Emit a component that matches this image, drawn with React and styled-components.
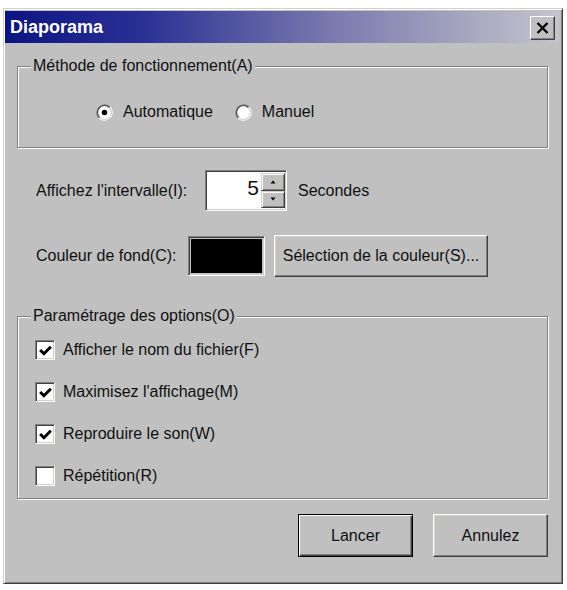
import React from "react";
import styled, { createGlobalStyle } from "styled-components";

const Global = createGlobalStyle`
  body {
    margin: 0;
    background: #ffffff;
    font-family: "Liberation Sans", Arial, sans-serif;
    font-size: 16px;
    color: #111111;
  }
`;

const Window = styled.div`
  box-sizing: border-box;
  width: 560px;
  height: 576px;
  margin: 8px 0 0 3px;
  padding: 2px 3px 2px 1px;
  background: #c0c0c0;
  border: 1px solid;
  border-color: #d4d0c8 #404040 #404040 #d4d0c8;
  box-shadow: inset 1px 1px 0 #ffffff, inset -1px -1px 0 #808080;
  display: flex;
  flex-direction: column;
`;

const TitleBar = styled.div`
  height: 32px;
  display: flex;
  align-items: center;
  justify-content: space-between;
  padding: 0 4px 0 5px;
  background: linear-gradient(to right, #0c1484 0%, #2a3194 25%, #7878ae 58%, #c4c4cc 100%);
`;

const Title = styled.span`
  color: #ffffff;
  font-weight: bold;
  font-size: 18px;
`;

const CloseButton = styled.button`
  box-sizing: border-box;
  width: 25px;
  height: 24px;
  padding: 0;
  margin-top: 2px;
  display: flex;
  align-items: center;
  justify-content: center;
  background: #c0c0c0;
  border: 1px solid;
  border-color: #ffffff #404040 #404040 #ffffff;
  box-shadow: inset -1px -1px 0 #808080;
`;

const Body = styled.div`
  flex: 1;
  display: flex;
  flex-direction: column;
  padding: 13px 11px 0 12px;
`;

const Group = styled.fieldset`
  margin: 0;
  padding: 0;
  min-width: 0;
  border: 1px solid #808080;
  box-shadow: inset 1px 1px 0 #ffffff, 1px 1px 0 #ffffff;
`;

const Legend = styled.legend`
  margin-left: 13px;
  padding: 0 2px;
  line-height: 20px;
  background: #c0c0c0;
`;

const GroupBody = styled.div`
  display: flex;
  flex-direction: ${(p) => p.$dir || "row"};
  gap: ${(p) => p.$gap || "0"};
  padding: ${(p) => p.$pad};
`;

const Choice = styled.label`
  display: flex;
  align-items: center;
  height: 20px;
  line-height: 20px;
  white-space: nowrap;
  gap: ${(p) => p.$gap || "8px"};
  margin-right: ${(p) => p.$mr || "0"};
`;

const Row = styled.div`
  display: flex;
  align-items: center;
  padding-left: 19px;
  margin-top: ${(p) => p.$mt};
`;

const FieldLabel = styled.span`
  width: ${(p) => p.$w};
  flex-shrink: 0;
  white-space: nowrap;
`;

const Sunken = styled.div`
  box-sizing: border-box;
  border: 1px solid;
  border-color: #808080 #ffffff #ffffff #808080;
  box-shadow: inset 1px 1px 0 #404040, inset -1px -1px 0 #d4d0c8;
`;

const SpinBox = styled(Sunken)`
  width: 82px;
  height: 41px;
  display: flex;
  padding: 2px 1px 2px 2px;
  background: #ffffff;
`;

const SpinValue = styled.span`
  flex: 1;
  text-align: right;
  padding-right: 2px;
  font-size: 21px;
  line-height: 30px;
`;

const SpinButtons = styled.div`
  width: 24px;
  display: flex;
  flex-direction: column;
`;

const SpinArrow = styled.div`
  flex: 1;
  box-sizing: border-box;
  background: #c0c0c0;
  display: flex;
  align-items: center;
  justify-content: center;
  border: 1px solid;
  border-color: #d4d0c8 #404040 #404040 #d4d0c8;
  box-shadow: inset 1px 1px 0 #ffffff, inset -1px -1px 0 #808080;
`;

const Unit = styled.span`
  margin-left: 11px;
`;

const Swatch = styled(Sunken)`
  width: 77px;
  height: 40px;
  padding: 2px;
  background: #c0c0c0;
  &::after {
    content: "";
    display: block;
    height: 100%;
    background: #000000;
  }
`;

const Button = styled.button`
  box-sizing: border-box;
  width: ${(p) => p.$w};
  height: ${(p) => p.$h || "43px"};
  margin-left: ${(p) => p.$ml || "0"};
  padding: 0;
  font: inherit;
  white-space: nowrap;
  color: #111111;
  background: #c0c0c0;
  border: 1px solid;
  border-color: ${(p) =>
    p.$default ? "#000000" : "#ffffff #404040 #404040 #ffffff"};
  box-shadow: ${(p) =>
    p.$default
      ? "inset 1px 1px 0 #ffffff, inset -1px -1px 0 #404040, inset -2px -2px 0 #808080"
      : "inset -1px -1px 0 #808080, inset 1px 1px 0 #d4d0c8"};
`;

const Check = styled(Sunken)`
  width: 20px;
  height: 20px;
  background: #ffffff;
  display: flex;
  align-items: center;
  justify-content: center;
  flex-shrink: 0;
`;

const Footer = styled.div`
  display: flex;
  justify-content: flex-end;
  margin-top: 15px;
`;

const Spacer = styled.div`
  height: ${(p) => p.$h};
  flex-shrink: 0;
`;

function Radio({ checked }) {
  return (
    <svg width="17" height="17" viewBox="0 0 16 16">
      <circle cx="8" cy="8" r="6.5" fill="#ffffff" />
      <path d="M2.7 13.3 A7.5 7.5 0 0 1 13.3 2.7" fill="none" stroke="#808080" />
      <path d="M13.3 2.7 A7.5 7.5 0 0 1 2.7 13.3" fill="none" stroke="#ffffff" />
      <path d="M3.4 12.6 A6.5 6.5 0 0 1 12.6 3.4" fill="none" stroke="#404040" />
      <path d="M12.6 3.4 A6.5 6.5 0 0 1 3.4 12.6" fill="none" stroke="#d4d0c8" />
      {checked && <circle cx="8" cy="8" r="2.6" fill="#000000" />}
    </svg>
  );
}

function CheckBox({ checked, label }) {
  return (
    <Choice $gap="8px">
      <Check>
        {checked && (
          <svg width="15" height="15" viewBox="0 0 14 14">
            <polyline
              points="2,6.5 5.5,10 12,3.5"
              fill="none"
              stroke="#000000"
              strokeWidth="2.8"
            />
          </svg>
        )}
      </Check>
      {label}
    </Choice>
  );
}

export default function App() {
  return (
    <>
      <Global />
      <Window>
        <TitleBar>
          <Title>Diaporama</Title>
          <CloseButton>
            <svg width="13" height="12" viewBox="0 0 13 12">
              <path d="M1.5 1 L11.5 11 M11.5 1 L1.5 11" stroke="#000000" strokeWidth="2.3" />
            </svg>
          </CloseButton>
        </TitleBar>
        <Body>
          <Group>
            <Legend>Méthode de fonctionnement(A)</Legend>
            <GroupBody $pad="26px 0 25px 78px">
              <Choice $gap="10px" $mr="22px">
                <Radio checked />
                Automatique
              </Choice>
              <Choice $gap="10px">
                <Radio />
                Manuel
              </Choice>
            </GroupBody>
          </Group>

          <Row $mt="22px">
            <FieldLabel $w="169px">Affichez l'intervalle(I):</FieldLabel>
            <SpinBox>
              <SpinValue>5</SpinValue>
              <SpinButtons>
                <SpinArrow>
                  <svg width="6" height="4" viewBox="0 0 6 4">
                    <path d="M3 0.5 L5.5 3.5 L0.5 3.5 Z" fill="#000000" />
                  </svg>
                </SpinArrow>
                <SpinArrow>
                  <svg width="6" height="4" viewBox="0 0 6 4">
                    <path d="M0.5 0.5 L5.5 0.5 L3 3.5 Z" fill="#000000" />
                  </svg>
                </SpinArrow>
              </SpinButtons>
            </SpinBox>
            <Unit>Secondes</Unit>
          </Row>

          <Row $mt="24px">
            <FieldLabel $w="152px">Couleur de fond(C):</FieldLabel>
            <Swatch />
            <Button $w="214px" $h="42px" $ml="9px">
              Sélection de la couleur(S)...
            </Button>
          </Row>

          <Spacer $h="29px" />
          <Group>
            <Legend>Paramétrage des options(O)</Legend>
            <GroupBody $pad="14px 0 12px 17px" $dir="column" $gap="22px">
              <CheckBox checked label="Afficher le nom du fichier(F)" />
              <CheckBox checked label="Maximisez l'affichage(M)" />
              <CheckBox checked label="Reproduire le son(W)" />
              <CheckBox label="Répétition(R)" />
            </GroupBody>
          </Group>

          <Footer>
            <Button $default $w="115px">
              Lancer
            </Button>
            <Button $w="115px" $ml="20px">
              Annulez
            </Button>
          </Footer>
        </Body>
      </Window>
    </>
  );
}
